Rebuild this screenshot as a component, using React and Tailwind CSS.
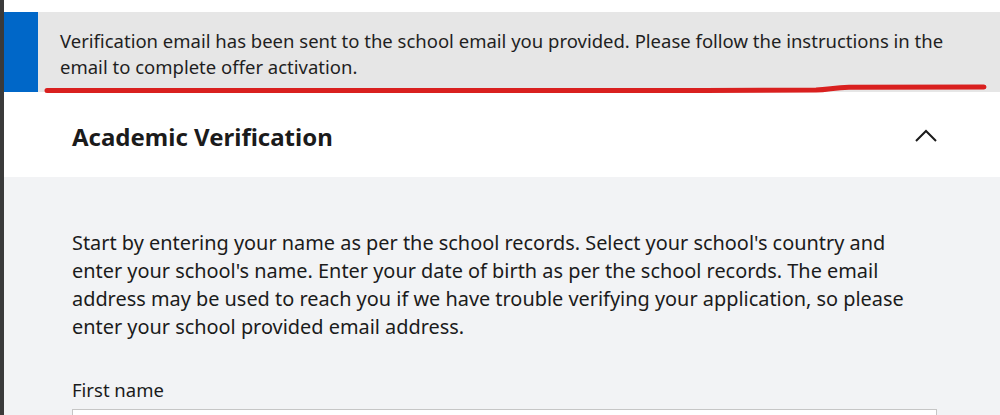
export default function App() {
    return (
        <div className="flex h-[415px] overflow-hidden bg-white" style={{ fontFamily: '"Noto Sans", "Open Sans", sans-serif' }}>

            {/* dark edge */}
            <div className="w-[4px] shrink-0 bg-[#3a3a3a]" />

            <div className="flex-1 pt-[12px]">

                {/* BANNER */}
                <div className="relative flex h-[80px] bg-[#e6e6e6]">
                    <div className="w-[34px] shrink-0 bg-[#0067c8]" />
                    <p className="pl-[22px] pt-[16px] pr-[30px] text-[18.5px] leading-[26px] text-[#1f1f1f]">
                        Verification email has been sent to the school email you provided. Please follow the instructions in the email to complete offer activation.
                    </p>

                    {/* red underline annotation */}
                    <svg className="absolute left-0 top-[72px]" width="996" height="12" viewBox="0 0 996 12">
                        <path
                            d="M43 6.5 L700 6.5 L812 6 C825 5.5 830 3.5 845 3.2 L980 3"
                            fill="none"
                            stroke="#d9201f"
                            strokeWidth="5"
                            strokeLinecap="round"
                        />
                    </svg>
                </div>

                {/* HEADER */}
                <div className="flex h-[85px] items-center justify-between pl-[68px] pr-[63px]">
                    <h2 className="pt-[4px] text-[24px] font-bold text-[#1b1b1b]">Academic Verification</h2>
                    <svg className="mt-[2px]" width="22" height="13" viewBox="0 0 22 13" fill="none" stroke="#1b1b1b" strokeWidth="2">
                        <path d="M1 12 L11 2 L21 12" />
                    </svg>
                </div>

                {/* BODY */}
                <div className="h-full bg-[#f2f3f5] pl-[68px] pr-[63px] pt-[52px]">
                    <p className="max-w-[848px] text-[19.9px] leading-[28px] text-[#1b1b1b]">
                        Start by entering your name as per the school records. Select your school's country and enter your school's name. Enter your date of birth as per the school records. The email address may be used to reach you if we have trouble verifying your application, so please enter your school provided email address.
                    </p>

                    <label className="mt-[37px] block text-[18.5px] leading-[24px] text-[#1b1b1b]">First name</label>
                    <input
                        type="text"
                        className="mt-[7px] block h-[36px] w-full border border-[#c6c6c6] bg-white"
                    />
                </div>

            </div>
        </div>
    );
}
